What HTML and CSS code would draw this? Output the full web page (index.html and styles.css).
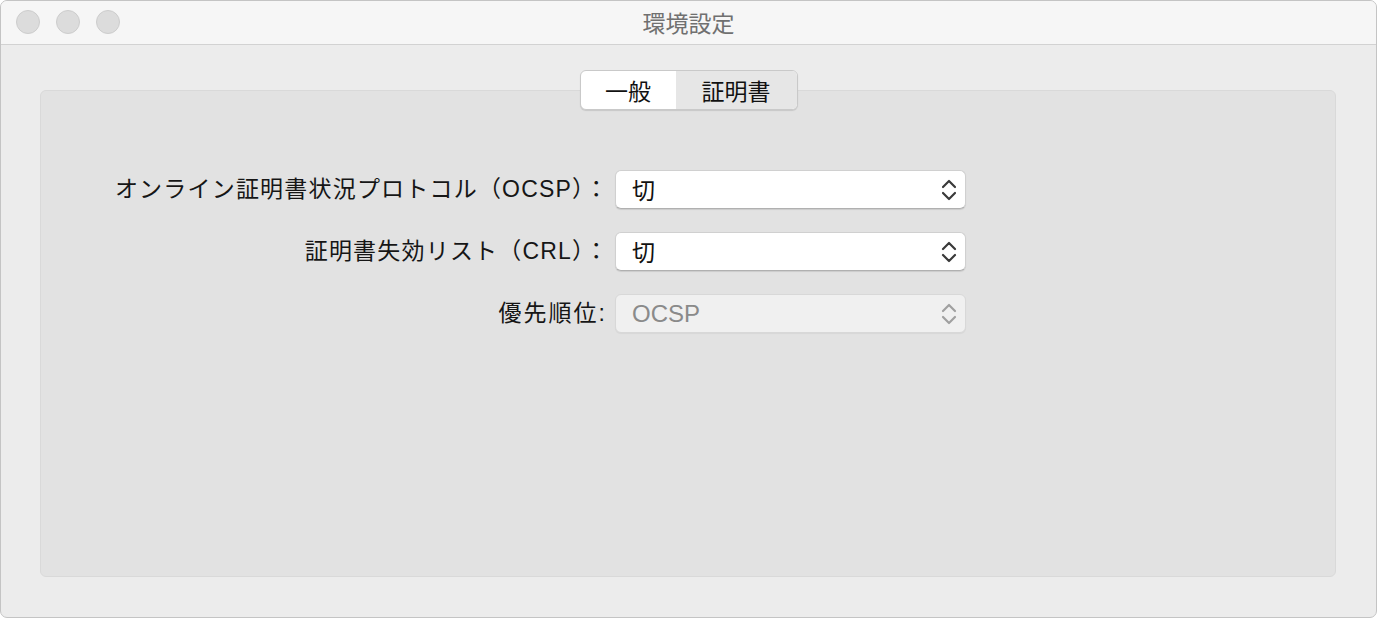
FILE: index.html
```html
<!DOCTYPE html>
<html lang="ja">
<head>
    <meta charset="UTF-8">
    <meta name="viewport" content="width=device-width, initial-scale=1.0">
    <title>環境設定</title>
    <link rel="stylesheet" href="styles.css">
</head>
<body>
    <div class="window">
        <div class="titlebar">
            <div class="lights">
                <span class="light"></span>
                <span class="light"></span>
                <span class="light"></span>
            </div>
            <div class="title">環境設定</div>
        </div>

        <div class="content">
            <div class="tabs">
                <div class="tab">一般</div>
                <div class="tab selected">証明書</div>
            </div>

            <div class="panel">
                <div class="form">
                    <label class="label wide">オンライン証明書状況プロトコル（OCSP）：</label>
                    <div class="popup">
                        <span class="value">切</span>
                        <svg class="arrows" width="16" height="24" viewBox="0 0 16 24"><path d="M2 9 L8 3 L14 9 M2 15 L8 21 L14 15" fill="none" stroke="currentColor" stroke-width="2.2" stroke-linecap="round" stroke-linejoin="round"/></svg>
                    </div>

                    <label class="label wide">証明書失効リスト（CRL）：</label>
                    <div class="popup">
                        <span class="value">切</span>
                        <svg class="arrows" width="16" height="24" viewBox="0 0 16 24"><path d="M2 9 L8 3 L14 9 M2 15 L8 21 L14 15" fill="none" stroke="currentColor" stroke-width="2.2" stroke-linecap="round" stroke-linejoin="round"/></svg>
                    </div>

                    <label class="label short">優先順位:</label>
                    <div class="popup disabled">
                        <span class="value latin">OCSP</span>
                        <svg class="arrows" width="16" height="24" viewBox="0 0 16 24"><path d="M2 9 L8 3 L14 9 M2 15 L8 21 L14 15" fill="none" stroke="currentColor" stroke-width="2.2" stroke-linecap="round" stroke-linejoin="round"/></svg>
                    </div>
                </div>
            </div>
        </div>
    </div>
</body>
</html>
```

FILE: styles.css
```css
/* Basic reset */
* {
    box-sizing: border-box;
    margin: 0;
    padding: 0;
}

html, body {
    width: 100%;
    height: 100%;
}

body {
    background-color: #ffffff;
    font-family: "Liberation Sans", "Noto Sans CJK JP", sans-serif;
    color: #1a1a1a;
    overflow: hidden;
}

/* Window frame */
.window {
    width: 1377px;
    height: 618px;
    display: flex;
    flex-direction: column;
    background-color: #ececec;
    border: 1px solid #c4c4c4;
    border-radius: 7px;
    overflow: hidden;
}

/* Title bar */
.titlebar {
    position: relative;
    height: 44px;
    flex-shrink: 0;
    display: flex;
    align-items: center;
    justify-content: center;
    background-color: #f6f6f6;
    border-bottom: 1px solid #d2d2d2;
}

.lights {
    position: absolute;
    left: 15px;
    top: 9px;
    display: flex;
    gap: 16px;
}

.light {
    width: 24px;
    height: 24px;
    border-radius: 50%;
    background-color: #dcdcdc;
    border: 1px solid #cdcdcd;
}

.title {
    font-family: "Noto Sans CJK JP", sans-serif;
    font-size: 23px;
    color: #707070;
    line-height: 1;
    margin-top: -1px;
}

/* Content area */
.content {
    flex: 1;
    display: flex;
    flex-direction: column;
    padding: 25px 40px 40px 39px;
}

/* Tabs */
.tabs {
    position: relative;
    z-index: 1;
    align-self: center;
    display: flex;
    height: 40px;
    margin-left: 1px;
    background-color: #ffffff;
    border: 1px solid #c9c9c9;
    border-radius: 6px;
    box-shadow: 0 1px 1px rgba(0, 0, 0, 0.12);
    overflow: hidden;
}

.tab {
    display: flex;
    align-items: center;
    justify-content: center;
    font-family: "Noto Sans CJK JP", sans-serif;
    font-size: 23px;
    color: #111;
    width: 95px;
}

.tab.selected {
    width: 121px;
    background-color: #e6e6e6;
}

/* Panel */
.panel {
    flex: 1;
    margin-top: -20px;
    background-color: #e2e2e2;
    border: 1px solid #d9d9d9;
    border-radius: 6px;
    padding-top: 79px;
}

.form {
    display: grid;
    grid-template-columns: 564px 350px;
    column-gap: 11px;
    row-gap: 23px;
    align-items: center;
}

.label {
    text-align: right;
    font-size: 23px;
    white-space: nowrap;
    color: #161616;
    line-height: 1;
}

.label.wide {
    letter-spacing: 1.2px;
    margin-right: -4px;
}

.label.short {
    letter-spacing: 2px;
    margin-right: -2px;
}

/* Popup buttons */
.popup {
    height: 39px;
    display: flex;
    align-items: center;
    justify-content: space-between;
    padding: 0 8px 0 16px;
    background-color: #ffffff;
    border-radius: 6px;
    border: 1px solid #d0d0d0;
    border-bottom-color: #b0b0b0;
    box-shadow: 0 1px 1px rgba(0, 0, 0, 0.1);
    color: #3a3a3a;
    margin-left: -1px;
}

.popup .value {
    font-family: "Noto Sans CJK JP", sans-serif;
    font-size: 23px;
    color: #111;
    line-height: 1;
}

.popup .value.latin {
    font-family: "Liberation Sans", sans-serif;
    font-size: 24px;
}

.popup.disabled {
    background-color: #f0f0f0;
    border-color: #d8d8d8;
    box-shadow: 0 1px 1px rgba(0, 0, 0, 0.05);
    color: #a0a0a0;
}

.popup.disabled .value {
    color: #8a8a8a;
}
```
